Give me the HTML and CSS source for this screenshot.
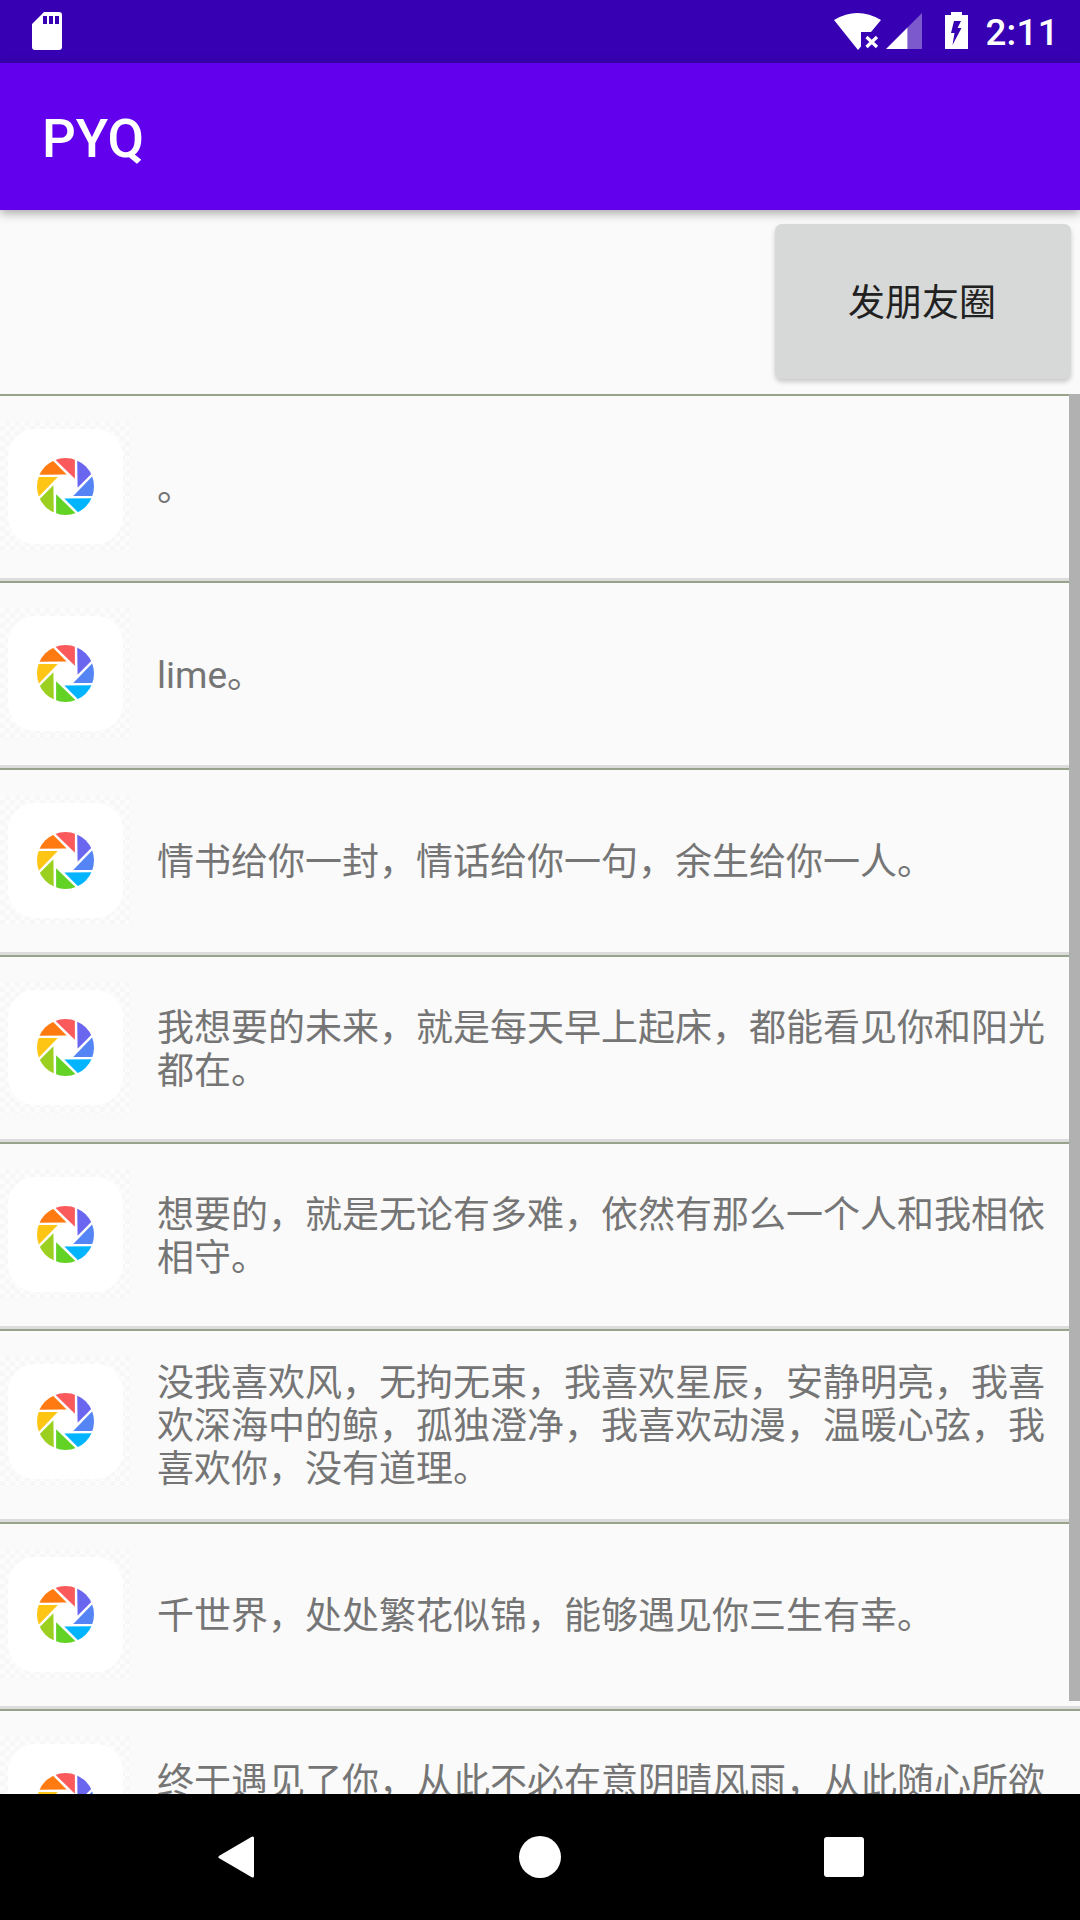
FILE: index.html
```html
<!DOCTYPE html>
<html lang="zh-CN">
<head>
<meta charset="utf-8">
<title>PYQ</title>
<link rel="stylesheet" href="styles.css">
</head>
<body>
<svg class="defs" width="0" height="0" aria-hidden="true">
  <defs>
    <clipPath id="disc"><circle cx="0" cy="0" r="85"/></clipPath>
    <polygon id="blade" points="28,-23 28,-99 -50,-99"/>
    <symbol id="aperture" viewBox="-85 -85 170 170">
      <g clip-path="url(#disc)">
        <use href="#blade" fill="#fb5a5c"/>
        <use href="#blade" fill="#6a66f0" transform="rotate(45)"/>
        <use href="#blade" fill="#5585f5" transform="rotate(90)"/>
        <use href="#blade" fill="#00b4ff" transform="rotate(135)"/>
        <use href="#blade" fill="#62d225" transform="rotate(180)"/>
        <use href="#blade" fill="#9bd021" transform="rotate(225)"/>
        <use href="#blade" fill="#ffc515" transform="rotate(270)"/>
        <use href="#blade" fill="#ff7a10" transform="rotate(315)"/>
      </g>
    </symbol>
  </defs>
</svg>
<div class="screen">
  <header class="status">
    <svg class="ic-sd" viewBox="0 0 30 38"><path fill="#fff" fill-rule="evenodd" d="M12 0H27a3 3 0 0 1 3 3V35a3 3 0 0 1-3 3H3a3 3 0 0 1-3-3V12ZM11 4V12H15V4ZM17 4V12H21V4ZM23 4V12H27V4Z"/></svg>
    <div class="status-right">
      <svg class="ic-wifi" viewBox="0 0 47 37"><path fill="#fff" d="M0 7Q23.500 -7 47 7L37 19H27V33.500L24 37Z"/><path fill="none" stroke="#fff" stroke-width="3.200" d="M32.500 24L43 34M43 24L32.500 34"/></svg>
      <svg class="ic-signal" viewBox="0 0 36 36"><path fill="#fff" d="M0 36L21.500 14.500V36Z"/><path fill="#fff" fill-opacity=".35" d="M21.500 14.500L36 0V36H21.500Z"/></svg>
      <svg class="ic-bat" viewBox="0 0 23 37"><path fill="#fff" fill-rule="evenodd" d="M6 0H17V3H23V37H0V3H6ZM9 9H16L12.500 16H16.500L7.500 33L9.500 21H6Z"/></svg>
      <span class="clock">2:11</span>
    </div>
  </header>
  <div class="appbar"><h1 class="title">PYQ</h1></div>
  <main class="content">
    <div class="action"><button class="post"><span class="post-label">发朋友圈</span></button></div>
    <div class="list">
      <div class="scrollbar"></div>
      <article class="row"><div class="avatar"><div class="tile"><svg class="aperture"><use href="#aperture"/></svg></div></div><p class="msg">。</p></article>
      <article class="row"><div class="avatar"><div class="tile"><svg class="aperture"><use href="#aperture"/></svg></div></div><p class="msg">lime。</p></article>
      <article class="row"><div class="avatar"><div class="tile"><svg class="aperture"><use href="#aperture"/></svg></div></div><p class="msg">情书给你一封，情话给你一句，余生给你一人。</p></article>
      <article class="row"><div class="avatar"><div class="tile"><svg class="aperture"><use href="#aperture"/></svg></div></div><p class="msg">我想要的未来，就是每天早上起床，都能看见你和阳光都在。</p></article>
      <article class="row"><div class="avatar"><div class="tile"><svg class="aperture"><use href="#aperture"/></svg></div></div><p class="msg">想要的，就是无论有多难，依然有那么一个人和我相依相守。</p></article>
      <article class="row row-tall"><div class="avatar"><div class="tile"><svg class="aperture"><use href="#aperture"/></svg></div></div><p class="msg">没我喜欢风，无拘无束，我喜欢星辰，安静明亮，我喜欢深海中的鲸，孤独澄净，我喜欢动漫，温暖心弦，我喜欢你，没有道理。</p></article>
      <article class="row"><div class="avatar"><div class="tile"><svg class="aperture"><use href="#aperture"/></svg></div></div><p class="msg">千世界，处处繁花似锦，能够遇见你三生有幸。</p></article>
      <article class="row"><div class="avatar"><div class="tile"><svg class="aperture"><use href="#aperture"/></svg></div></div><p class="msg">终于遇见了你，从此不必在意阴晴风雨，从此随心所欲相伴一生。</p></article>
    </div>
  </main>
  <nav class="navbar">
    <svg class="nav-back" viewBox="0 0 36 42"><path fill="#fff" stroke="#fff" stroke-width="3" stroke-linejoin="round" d="M34.500 2V40L2 21Z"/></svg>
    <svg class="nav-home" viewBox="0 0 42 42"><circle cx="21" cy="21" r="21" fill="#fff"/></svg>
    <svg class="nav-recent" viewBox="0 0 40 40"><rect width="40" height="40" rx="3" fill="#fff"/></svg>
  </nav>
</div>
</body>
</html>
```
FILE: styles.css
```css
* { box-sizing: border-box; }
html, body { margin: 0; padding: 0; }
body { width: 1080px; height: 1920px; overflow: hidden; background: #fafafa; font-family: Roboto, "Noto Sans CJK SC", sans-serif; }
.defs { position: absolute; }
.screen { width: 1080px; height: 1920px; display: flex; flex-direction: column; overflow: hidden; }

.status { height: 63px; flex: none; background: #3700b3; display: flex; align-items: flex-start; justify-content: space-between; padding: 12px 21px 0 32px; }
.ic-sd { width: 30px; height: 38px; display: block; }
.status-right { display: flex; align-items: flex-start; }
.ic-wifi { width: 47px; height: 37px; margin-top: 1px; }
.ic-signal { width: 36px; height: 36px; margin: 1px 0 0 5px; }
.ic-bat { width: 23px; height: 37px; margin-left: 23px; }
.clock { color: #fff; font-size: 36.75px; line-height: 43px; margin-left: 17px; font-weight: 500; letter-spacing: .3px; position: relative; top: -1px; }

.appbar { height: 147px; flex: none; background: #6200ee; display: flex; align-items: center; padding-left: 42px; box-shadow: 0 3px 10px rgba(0,0,0,.35); position: relative; z-index: 2; }
.title { margin: 0; color: #fff; font-size: 53px; font-weight: 500; line-height: 1; position: relative; top: 3px; }

.content { flex: 1; min-height: 0; overflow: hidden; background: #fafafa; }
.action { height: 184px; display: flex; justify-content: flex-end; align-items: flex-start; padding: 14px 9px 0 0; }
.post { width: 296px; height: 155px; border: 0; border-radius: 7px; background: #d7d8d8; color: #212121; font-family: inherit; font-size: 37px; box-shadow: 0 3px 5px rgba(0,0,0,.2); padding: 0 2px 4px 0; }
.post-label { display: block; }

.list { position: relative; border-top: 2px solid #98a38c; }
.scrollbar { position: absolute; top: -2px; right: 0; width: 11px; height: 1307px; background: #b1b1b1; z-index: 1; }
.row { height: 187px; display: flex; align-items: center; padding: 0 28px 0 0; border-bottom: 2px solid #98a38c; box-shadow: inset 0 -3px 0 #dcdcdc; }
.row-tall { height: 193px; }
.avatar { width: 131px; height: 131px; flex: none; align-self: flex-start; margin: 25px 26px 0 0; padding: 8px; background-color: #fafafa; background-image: conic-gradient(#f7f7f7 25%, #fcfcfc 0 50%, #f7f7f7 0 75%, #fcfcfc 0); background-size: 10px 10px; }
.tile { width: 115px; height: 115px; border-radius: 27px; background: #fff; display: flex; align-items: center; justify-content: center; }
.aperture { width: 57px; height: 57px; display: block; }
.msg { margin: 0; flex: 1; min-width: 0; color: #757575; font-size: 37px; line-height: 43px; }

.navbar { height: 126px; flex: none; background: #000; position: relative; z-index: 3; display: flex; align-items: flex-start; padding: 42px 0 0 218px; }
.nav-back { width: 36px; height: 42px; }
.nav-home { width: 42px; height: 42px; margin-left: 265px; }
.nav-recent { width: 40px; height: 40px; margin: 1px 0 0 263px; }
```
